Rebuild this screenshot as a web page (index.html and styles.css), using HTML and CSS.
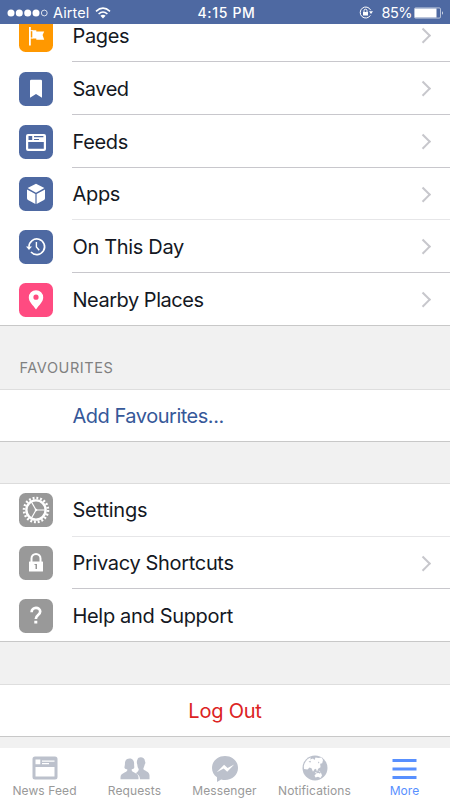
FILE: index.html
```html
<!DOCTYPE html>
<html lang="en">
<head>
<meta charset="utf-8">
<title>More</title>
<link rel="stylesheet" href="styles.css">
</head>
<body>
<div class="app">
  <header class="status">
    <div class="status-left">
      <svg class="signal" width="42" height="10" viewBox="0 0 42 10"><g fill="#fff"><circle cx="4" cy="5" r="3.5"/><circle cx="12.3" cy="5" r="3.5"/><circle cx="20.7" cy="5" r="3.5"/><circle cx="29" cy="5" r="3.5"/></g><circle cx="37.3" cy="5" r="2.9" fill="none" stroke="#fff" stroke-width=".8"/></svg>
      <span class="carrier">Airtel</span>
      <svg class="wifi" width="16" height="12" viewBox="0 0 16 12"><g fill="none" stroke="#fff" stroke-width="1.6"><path d="M1 4.4Q8-2 15 4.4"/><path d="M3.6 7Q8 3 12.4 7"/></g><path d="M5.4 8.8Q8 6.6 10.6 8.8L8 11.5z" fill="#fff"/></svg>
    </div>
    <span class="clock">4:15 PM</span>
    <div class="status-right">
      <svg class="lock" width="14" height="13" viewBox="0 0 14 13"><path d="M11.7 4.2A5.5 5.5 0 1 0 11.4 9.4" fill="none" stroke="#fff"/><path d="M10 5.3h4L12 8z" fill="#fff"/><path d="M4 6h5v3.5H4z" fill="#fff"/><path d="M5 6V4.7a1.5 1.5 0 0 1 3 0V6" fill="none" stroke="#fff"/></svg>
      <span class="percent">85%</span>
      <svg width="30" height="12" viewBox="0 0 30 12"><rect x=".5" y=".9" width="26" height="10.2" rx="1.2" fill="none" stroke="#fff" stroke-opacity=".75" stroke-width=".8"/><path d="M1 1.500h21.500v9H1z" fill="#fff"/><path d="M28 4q1.8 2 0 4z" fill="#fff"/></svg>
    </div>
  </header>

  <main class="content">
    <ul class="list list-top">
      <li class="row row-pages"><span class="icon orange"><svg viewBox="0 0 34 34"><path d="M10 9h1.800v18.500H10z"/><path d="M13.300 12.200h4v1.200h7.900L23.600 17l1.600 4.800h-7.900v-1.300h-4z"/><path d="M10 12.700h4M10 20h4" stroke="#fff" stroke-width="1"/></svg></span><span class="label">Pages</span><i class="chevron"></i></li>
      <li class="row"><span class="icon blue"><svg viewBox="0 0 34 34"><path d="M11 9q0-1.2 1.2-1.2h9.600q1.200 0 1.200 1.200v16.800l-6-3.800-6 3.800z"/></svg></span><span class="label tight">Saved</span><i class="chevron"></i></li>
      <li class="row"><span class="icon blue"><svg viewBox="0 0 34 34"><path fill-rule="evenodd" d="M9 9h16q2 0 2 2v13q0 2-2 2H9q-2 0-2-2V11q0-2 2-2zM9.200 17v6.700h15.600V17zM9.500 11v4h3.700v-4zM15 11v1.200h9.400V11zM15 14v1h5v-1z"/></svg></span><span class="label">Feeds</span><i class="chevron"></i></li>
      <li class="row row-apps"><span class="icon blue"><svg viewBox="0 0 34 34"><path d="M17 6.800l8.400 4.200-8.400 4.700L8.600 11zM8 12.400l8.400 4.700v10L9 23q-1-.6-1-1.800zM26 12.400l-8.400 4.700v10L25 23q1-.6 1-1.800z"/></svg></span><span class="label">Apps</span><i class="chevron"></i></li>
      <li class="row"><span class="icon blue"><svg viewBox="0 0 34 34"><path d="M10 16.800a7.800 7.800 0 1 1 2 5.200" fill="none" stroke="#fff" stroke-width="1.700"/><path d="M7 16.500h6L10 20z"/><path d="M17.400 12v5l2.800 3.300" fill="none" stroke="#fff" stroke-width="1.400"/></svg></span><span class="label">On This Day</span><i class="chevron"></i></li>
      <li class="row row-last row-nearby"><span class="icon pink"><svg viewBox="0 0 34 34"><path fill-rule="evenodd" d="M17 7.200a7.200 7.200 0 0 1 7.200 7.300C24.200 19 20 22 17 26.500 14 22 9.800 19 9.800 14.500A7.200 7.200 0 0 1 17 7.200zM17 11.600a2.600 2.600 0 1 0 0 5.200 2.600 2.600 0 0 0 0-5.200z"/></svg></span><span class="label tight">Nearby Places</span><i class="chevron"></i></li>
    </ul>

    <h2 class="section-title"><span>FAVOURITES</span></h2>
    <div class="card add"><span class="label tight">Add Favourites...</span></div>

    <ul class="list list-settings">
      <li class="row row-settings"><span class="icon gray"><svg viewBox="0 0 34 34"><g fill="none" stroke="#fff"><circle cx="17" cy="17" r="12" stroke-width="2.600" stroke-dasharray="1.900 1.870"/><circle cx="17" cy="17" r="9.600" stroke-width="2.400"/><path d="M17 17h9M17 17l-4.500-8M17 17l-4.500 8" stroke-width="1.200"/></g><circle cx="17" cy="17" r="1.300"/></svg></span><span class="label loose">Settings</span></li>
      <li class="row row-privacy"><span class="icon gray"><svg viewBox="0 0 34 34"><path fill-rule="evenodd" d="M10.500 15.500h13q.5 0 .5.500v9q0 .5-.5.500h-13q-.5 0-.5-.500v-9q0-.5.500-.500zM15.500 18v1h1v4h1.500v-5z"/><path d="M12.500 16v-3.500a4.500 4.500 0 0 1 9 0V16" fill="none" stroke="#fff" stroke-width="2"/></svg></span><span class="label">Privacy Shortcuts</span><i class="chevron"></i></li>
      <li class="row row-last row-help"><span class="icon gray"><svg viewBox="0 0 34 34"><path d="M12.600 13.200c0-5.600 8.600-5.600 8.600-.6 0 3.600-4.400 3.400-4.400 7.400" fill="none" stroke="#fff" stroke-width="2.700"/><path d="M15.300 21.700h3v2.900h-3z"/></svg></span><span class="label">Help and Support</span></li>
    </ul>

    <div class="card logout"><span class="label loose">Log Out</span></div>
  </main>

  <nav class="tabs">
    <div class="tab"><svg width="26" height="24" viewBox="0 0 26 24"><path fill-rule="evenodd" d="M3 .5h20q2.500 0 2.500 2.500v18q0 2.500-2.500 2.500H3Q.5 23.500.5 21V3Q.5.5 3 .5zM3.500 11v9.500h19V11zM3.500 3.500v4.800h4.800V3.500zM10 4.500v1.200h12.500V4.500zM10 7v1.300h7V7z"/></svg><span>News Feed</span></div>
    <div class="tab"><svg width="30" height="24" viewBox="0 0 30 24"><path d="M17.500 3.500C18 .3 25 .3 25 5.500c.7 1 .3 2.500-.3 3-.3 2-1.200 3-1.400 4.500 1 2.200 6.200 2 6.200 6.500v3.700H20c-.3-4.500-2.500-5-4.500-6 2-1.200 3-1.700 3.300-4.200-1-1-1.300-2.500-1.500-4.500-.8-1.500-.4-4 .2-5z"/><path d="M9.500 2.500c4 0 4.800 3.300 4.600 6-.1 2.300.8 3-.4 4-.7.700-1.500.5-2.200 1.200.3 3.500 7 2.500 7 7.800v1.700H.5v-1.700c0-5.300 6.500-4.300 7-7.800-.8-.7-2.500-.5-2.900-1.700-.5-1.200.3-2 .3-3.500 0-2.700.7-6 4.600-6z"/></svg><span>Requests</span></div>
    <div class="tab"><svg width="28" height="28" viewBox="0 0 28 28"><path fill-rule="evenodd" d="M14 1c7.400 0 13 5.200 13 12s-5.600 12-13 12c-1.500 0-2.500-.2-3.800-.6L6 27v-4.700C2.800 20.200 1 17 1 13 1 6.200 6.600 1 14 1zM5.700 17.200l7-3.800 3.500 3.300 7-7.300-6.600 3.600-3.500-3.300z"/></svg><span>Messenger</span></div>
    <div class="tab"><svg width="26" height="26" viewBox="0 0 26 26"><circle cx="13" cy="13" r="12.500"/><path fill="#fff" d="M1.800 11C3 6 6 3 9 2.500l-1 2 3-1 1.500 1.500 1-2.500 3 .5 3-.5 1.500 2.500-.8 3.200-2 .5.300 3.500-2.300 1.500-1.200 3-1-3-1.500.5-1.500 2.500-1.500-3.500-2-.7-2 2-3.500-.5z"/><path d="M6.500 6.500l2.500-.7-.7 2zM16 6.500l1.500 1-1.200 1z"/><path fill="#fff" d="M12.500 20.500l2.200-2.200 2-.3 1.300.7.800-1.400 1.200 3.200-1.500 2.500-2.500-1.300-2.500.8zM12.500 16.800l2.500 1-1 .6zM16.500 15.500l2 .7-1.500.6z"/></svg><span>Notifications</span></div>
    <div class="tab active"><svg width="25" height="22" viewBox="0 0 25 22"><path d="M.5 1h24v3H.5zM.5 9.500h24v3H.5zM.5 18h24v3H.5z"/></svg><span>More</span></div>
  </nav>
</div>
</body>
</html>
```
FILE: styles.css
```css
* { box-sizing: border-box; }
body { margin: 0; font-family: Inter, "Liberation Sans", sans-serif; font-weight: 400; color: #141823; }
.app { width: 450px; height: 800px; display: flex; flex-direction: column; overflow: hidden; background: #f1f1f1; }
.status { flex: none; height: 24px; padding: 1px 6px 0 7px; display: grid; grid-template-columns: 1fr auto 1fr; align-items: center; background: #4e69a2; color: #fff; font-size: 14.5px; line-height: 23px; }
.status-left, .status-right { display: flex; align-items: center; }
.status-right { justify-content: flex-end; }
.carrier { margin-left: 4px; letter-spacing: .1px; }
.wifi { margin-left: 6px; }
.clock { font-weight: 500; font-size: 14px; letter-spacing: .65px; padding-left: 2px; }
.percent { margin: 0 2px 0 8px; font-size: 14.5px; letter-spacing: -.5px; }
.content { flex: 1; min-height: 0; overflow: hidden; }
.list { list-style: none; margin: 0; padding: 0; background: #fff; border-bottom: 1px solid #c8c8c8; }
.list-top { margin-top: -15px; }
.row { height: 53px; display: flex; align-items: center; padding: 0 19px; background: linear-gradient(#c8c7cc, #c8c7cc) 72px 100% / 100% 1px no-repeat; }
.row-apps, .row-privacy { height: 52px; }
.row-pages, .row-settings { padding-bottom: 1px; }
.row-pages .label { padding-top: 2px; }
.row-apps, .row-settings { background-image: linear-gradient(#e6e6e8, #e6e6e8); }
.row-last { height: 52px; background: none; }
.row-nearby, .row-help { padding-top: 1px; }
.icon { width: 34px; height: 34px; flex: none; border-radius: 6.5px; overflow: hidden; }
.icon svg { display: block; width: 34px; height: 34px; fill: #fff; }
.orange { background: #ff9800; }
.blue { background: #4e69a2; }
.pink { background: #ff4b81; }
.gray { background: #999; }
.label { font-size: 20px; line-height: 26px; letter-spacing: -.33px; white-space: nowrap; }
.label.tight { letter-spacing: -.48px; }
.label.loose { letter-spacing: -.22px; }
.row .label { flex: 1; margin-left: 19.5px; }
.chevron { width: 10.5px; height: 10.5px; margin-right: 3px; border: solid #c7c7cc; border-width: 2px 2px 0 0; transform: rotate(45deg); }
.section-title { height: 63px; margin: 0; padding: 32px 19.5px 0; font-size: 14.5px; line-height: 20px; font-weight: 400; letter-spacing: .55px; color: #808080; }
.card { height: 53px; background: #fff; border: solid; border-width: 1px 0; border-color: #dedede #c8c8c8 #c8c8c8; display: flex; align-items: center; }
.add { padding-left: 72.5px; color: #365899; }
.list-settings { margin-top: 41px; border-top: 1px solid #dcdcdc; }
.logout { margin-top: 42px; justify-content: center; color: #dc2323; }
.tabs { flex: none; height: 52px; display: grid; grid-template-columns: repeat(5, 90px); background: #fff; color: #999; }
.tab { display: flex; flex-direction: column; align-items: center; justify-content: space-between; padding: 0 1px 1px 0; height: 52px; font-size: 12px; line-height: 16px; letter-spacing: .1px; white-space: nowrap; }
.tab svg { fill: #bcc1cc; margin-top: 7px; }
.tab:nth-child(1), .tab:nth-child(2) { padding-top: 1px; }
.tab.active { color: #5890ff; padding-top: 3px; }
.tab.active svg { fill: #5890ff; }
```
